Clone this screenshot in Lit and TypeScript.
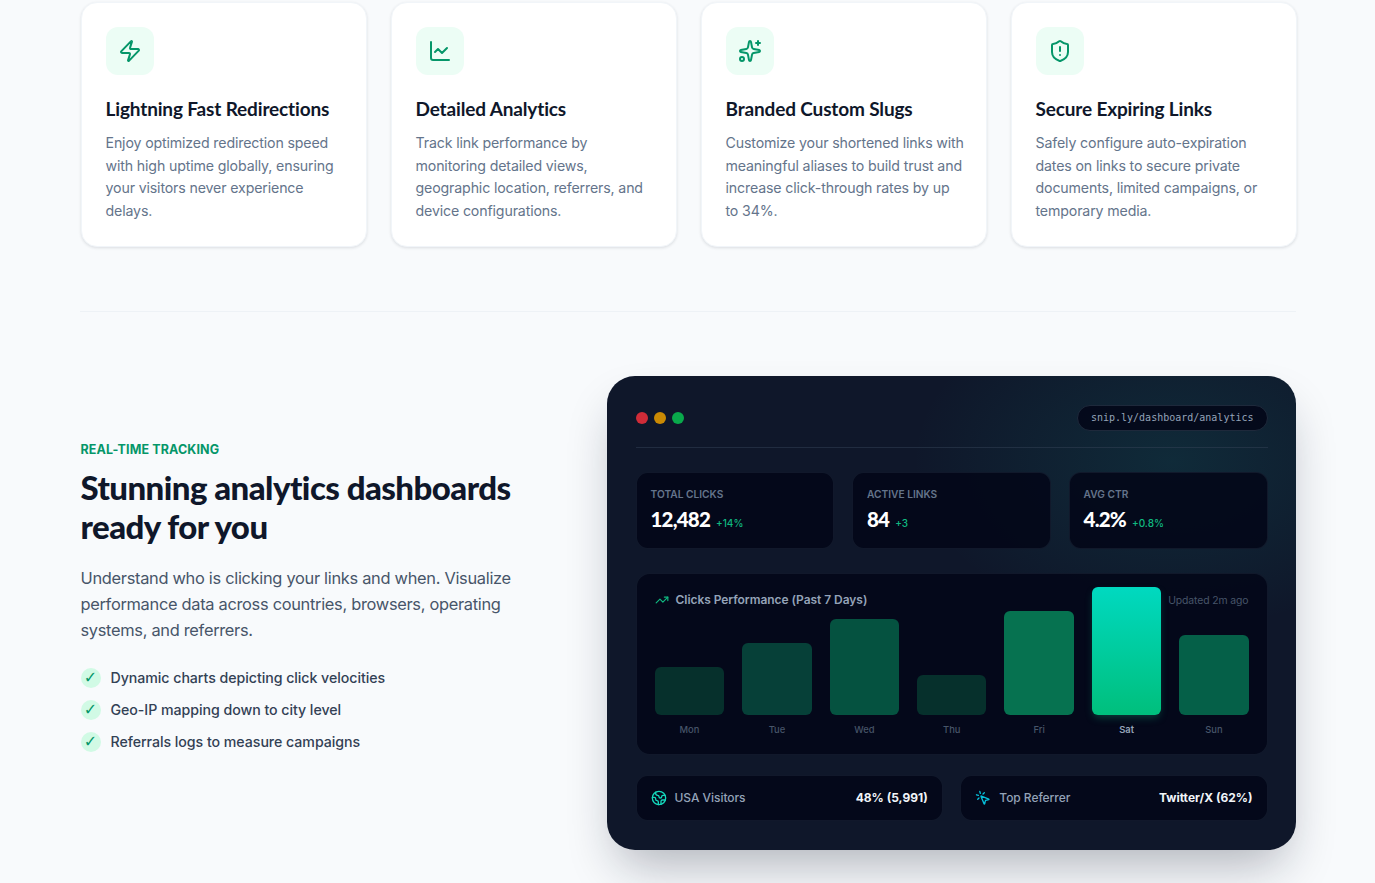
import {LitElement, html, css, svg} from 'lit';
import {customElement} from 'lit/decorators.js';

const icon = (body: unknown, size = 24, cls = '') => html`<svg class=${cls} width=${size} height=${size} viewBox="0 0 24 24" fill="none" stroke="currentColor" stroke-width="2" stroke-linecap="round" stroke-linejoin="round">${body}</svg>`;

const zap = svg`<path d="M4 14a1 1 0 0 1-.78-1.63l9.9-10.2a.5.5 0 0 1 .86.46l-1.92 6.02A1 1 0 0 0 13 10h7a1 1 0 0 1 .78 1.63l-9.9 10.2a.5.5 0 0 1-.86-.46l1.92-6.02A1 1 0 0 0 11 14z"/>`;
const chart = svg`<path d="M3 3v16a2 2 0 0 0 2 2h16"/><path d="m19 9-5 5-4-4-3 3"/>`;
const sparkles = svg`<path d="M11.017 2.814a1 1 0 0 1 1.966 0l1.051 5.558a2 2 0 0 0 1.594 1.594l5.558 1.051a1 1 0 0 1 0 1.966l-5.558 1.051a2 2 0 0 0-1.594 1.594l-1.051 5.558a1 1 0 0 1-1.966 0l-1.051-5.558a2 2 0 0 0-1.594-1.594l-5.558-1.051a1 1 0 0 1 0-1.966l5.558-1.051a2 2 0 0 0 1.594-1.594z"/><path d="M20 2v4"/><path d="M22 4h-4"/><circle cx="4" cy="20" r="2"/>`;
const shield = svg`<path d="M20 13c0 5-3.5 7.5-7.66 8.95a1 1 0 0 1-.67-.01C7.5 20.5 4 18 4 13V6a1 1 0 0 1 1-1c2 0 4.5-1.2 6.24-2.72a1.17 1.17 0 0 1 1.52 0C14.51 3.81 17 5 19 5a1 1 0 0 1 1 1z"/><path d="M12 8v4"/><path d="M12 16h.01"/>`;
const trending = svg`<polyline points="22 7 13.5 15.5 8.5 10.5 2 17"/><polyline points="16 7 22 7 22 13"/>`;
const earth = svg`<path d="M21.54 15H17a2 2 0 0 0-2 2v4.54"/><path d="M7 3.34V5a3 3 0 0 0 3 3a2 2 0 0 1 2 2c0 1.1.9 2 2 2a2 2 0 0 0 2-2c0-1.1.9-2 2-2h3.17"/><path d="M11 21.95V18a2 2 0 0 0-2-2a2 2 0 0 1-2-2v-1a2 2 0 0 0-2-2H2.05"/><circle cx="12" cy="12" r="10"/>`;
const pointer = svg`<path d="M14 4.1 12 6"/><path d="m5.1 8-2.9-.8"/><path d="m6 12-1.9 2"/><path d="M7.2 2.2 8 5.1"/><path d="M9.037 9.69a.498.498 0 0 1 .653-.653l11 4.5a.5.5 0 0 1-.074.949l-4.349 1.041a1 1 0 0 0-.74.739l-1.04 4.35a.5.5 0 0 1-.95.074z"/>`;

const features = [
	{icon: zap, title: 'Lightning Fast Redirections', text: 'Enjoy optimized redirection speed with high uptime globally, ensuring your visitors never experience delays.'},
	{icon: chart, title: 'Detailed Analytics', text: 'Track link performance by monitoring detailed views, geographic location, referrers, and device configurations.'},
	{icon: sparkles, title: 'Branded Custom Slugs', text: 'Customize your shortened links with meaningful aliases to build trust and increase click-through rates by up to\u00a034%.'},
	{icon: shield, title: 'Secure Expiring Links', text: 'Safely configure auto-expiration dates on links to secure private documents, limited campaigns, or temporary media.'},
];

const stats = [
	{label: 'Total Clicks', value: '12,482', delta: '+14%'},
	{label: 'Active Links', value: '84', delta: '+3'},
	{label: 'Avg CTR', value: '4.2%', delta: '+0.8%'},
];

const bars = [
	{day: 'Mon', h: 48, color: '#06302c'},
	{day: 'Tue', h: 72, color: '#064038'},
	{day: 'Wed', h: 96, color: '#055240'},
	{day: 'Thu', h: 40, color: '#06302c'},
	{day: 'Fri', h: 104, color: '#067250'},
	{day: 'Sat', h: 128, color: '', active: true},
	{day: 'Sun', h: 80, color: '#056048'},
];

const checks = ['Dynamic charts depicting click velocities', 'Geo-IP mapping down to city level', 'Referrals logs to measure campaigns'];

@customElement('app-root')
export class AppRoot extends LitElement {
	static styles = css`
		:host {
			display: block;
			min-height: 883px;
			background: #f8fafc;
			font-family: Inter, "Liberation Sans", sans-serif;
		}
		* { box-sizing: border-box; }
		.page { width: 1216px; margin: 0 auto; padding: 2px 0 33px; }
		.features {
			display: grid;
			grid-template-columns: repeat(4, 286px);
			gap: 24px;
			padding-left: 1px;
			padding-bottom: 64px;
			border-bottom: 1px solid #eef2f6;
		}
		.card {
			height: 245px;
			padding: 24px 19px 24px 24px;
			background: #fff;
			border: 1px solid #f1f5f9;
			border-radius: 16px;
			box-shadow: 0 1px 3px rgba(15, 23, 42, 0.12);
		}
		.card-icon {
			display: flex;
			align-items: center;
			justify-content: center;
			width: 48px;
			height: 48px;
			border-radius: 12px;
			background: #ecfdf5;
			color: #059669;
		}
		.card h3 {
			margin: 21px 0 9.8px;
			font-family: Lato, sans-serif;
			font-size: 19px;
			line-height: 26px;
			font-weight: 700;
			letter-spacing: -0.15px;
			color: #0f172a;
		}
		.card p {
			margin: 0;
			font-size: 14.2px;
			line-height: 22.7px;
			letter-spacing: -0.15px;
			color: #64748b;
		}
		.tracking {
			display: grid;
			grid-template-columns: 1fr 689px;
			gap: 64px;
			align-items: center;
			padding-top: 64px;
			padding-left: 1px;
		}
		.intro { padding-bottom: 32px; }
		.eyebrow {
			font-size: 12.5px;
			line-height: 16px;
			font-weight: 700;
			letter-spacing: 0.01em;
			color: #059669;
			text-transform: uppercase;
		}
		h2 {
			margin: 10px 0 20px;
			font-family: Lato, sans-serif;
			font-size: 33px;
			line-height: 38.4px;
			font-weight: 900;
			letter-spacing: -0.55px;
			color: #0f172a;
		}
		.lead {
			margin: 0 0 25px;
			max-width: 440px;
			font-size: 16.4px;
			line-height: 26px;
			letter-spacing: -0.3px;
			color: #475569;
		}
		ul { list-style: none; margin: 0; padding: 0; display: grid; gap: 12px; }
		li {
			display: flex;
			align-items: center;
			gap: 10px;
			font-size: 14.2px;
			line-height: 20px;
			font-weight: 500;
			letter-spacing: -0.05px;
			color: #334155;
		}
		.tick {
			display: flex;
			align-items: center;
			justify-content: center;
			width: 20px;
			height: 20px;
			border-radius: 50%;
			background: #d1fae5;
			color: #059669;
			font-family: "DejaVu Sans", sans-serif;
			font-size: 16px;
		}
		.panel {
			position: relative;
			height: 474px;
			padding: 29px 28px 29px 29px;
			border-radius: 28px;
			background:
				radial-gradient(260px 170px at 82% 18%, rgba(20, 184, 166, 0.12), rgba(20, 184, 166, 0) 100%),
				#0f172a;
			box-shadow: 0 25px 50px -12px rgba(15, 23, 42, 0.32);
		}
		.topbar {
			display: flex;
			align-items: center;
			justify-content: space-between;
			height: 43px;
			padding-bottom: 16px;
			border-bottom: 1px solid rgba(51, 65, 85, 0.5);
			margin-bottom: 24px;
		}
		.dots { display: flex; gap: 6px; }
		.dot { width: 12px; height: 12px; border-radius: 50%; }
		.url {
			height: 26px;
			padding: 0 13px 2px;
			display: flex;
			align-items: center;
			border: 1px solid #1e293b;
			border-radius: 13px;
			background: rgba(2, 6, 23, 0.86);
			font-family: "DejaVu Sans Mono", monospace;
			font-size: 10px;
			color: #94a3b8;
		}
		.tile {
			background: rgba(2, 6, 23, 0.86);
			border: 1px solid #1e293b80;
		}
		.stats {
			display: grid;
			grid-template-columns: repeat(3, 1fr);
			gap: 17.6px;
			margin-bottom: 24px;
		}
		.stat { height: 77px; padding: 14px 14px; border-radius: 12px; }
		.stat-label {
			font-size: 10.2px;
			line-height: 14px;
			font-weight: 600;
			text-transform: uppercase;
			color: #64748b;
		}
		.stat-row { display: flex; align-items: baseline; gap: 6px; margin-top: 5px; }
		.stat-value {
			font-family: Lato, sans-serif;
			font-size: 20.5px;
			line-height: 26px;
			font-weight: 900;
			letter-spacing: -0.8px;
			color: #fff;
		}
		.stat-delta { font-size: 10px; font-weight: 500; color: #10b981; }
		.chart {
			position: relative;
			height: 182px;
			padding: 0 17.8px 0 18.3px;
			border-radius: 14px;
			margin-bottom: 20px;
		}
		.chart-head {
			position: absolute;
			top: 17px;
			left: 18px;
			right: 18px;
			display: flex;
			align-items: center;
			justify-content: space-between;
		}
		.chart-title {
			display: flex;
			align-items: center;
			gap: 7px;
			font-size: 12px;
			line-height: 18px;
			font-weight: 600;
			letter-spacing: -0.05px;
			color: #94a3b8;
		}
		.chart-title svg { color: #10b981; }
		.updated { font-size: 10.4px; letter-spacing: -0.1px; color: #475569; }
		.bars {
			display: grid;
			grid-template-columns: repeat(7, 1fr);
			gap: 18px;
			height: 100%;
			align-items: end;
			padding-bottom: 18px;
			position: relative;
		}
		.col { display: flex; flex-direction: column; align-items: stretch; }
		.bar { border-radius: 6px; }
		.bar.active {
			background: linear-gradient(to bottom, #00d9c0, #00bf7c);
			box-shadow: 0 4px 8px -2px rgba(16, 185, 129, 0.35);
		}
		.day {
			margin-top: 9px;
			text-align: center;
			font-size: 9.4px;
			line-height: 12px;
			font-weight: 500;
			color: #475569;
		}
		.day.active { color: #94a3b8; font-weight: 600; }
		.bottom {
			display: grid;
			grid-template-columns: repeat(2, 1fr);
			gap: 17.6px;
		}
		.info {
			height: 46px;
			padding: 0 14px 1px;
			display: flex;
			align-items: center;
			border-radius: 12px;
			font-size: 12px;
		}
		.info svg { margin-right: 8px; }
		.info .earth { color: #14d8bc; }
		.info .pointer { color: #06c1dc; }
		.info-label { flex: 1; font-weight: 500; letter-spacing: -0.05px; color: #94a3b8; }
		.info-value { font-weight: 700; color: #f1f5f9; }
	`;

	render() {
		return html`
			<div class="page">
				<section class="features">
					${features.map(f => html`
						<article class="card">
							<div class="card-icon">${icon(f.icon)}</div>
							<h3>${f.title}</h3>
							<p>${f.text}</p>
						</article>
					`)}
				</section>
				<section class="tracking">
					<div class="intro">
						<div class="eyebrow">Real-time tracking</div>
						<h2>Stunning analytics dashboards ready for you</h2>
						<p class="lead">Understand who is clicking your links and when. Visualize performance data across countries, browsers, operating systems, and referrers.</p>
						<ul>
							${checks.map(c => html`<li><span class="tick">✓</span>${c}</li>`)}
						</ul>
					</div>
					<div class="panel">
						<div class="topbar">
							<div class="dots">
								<span class="dot" style="background:#d02c38"></span>
								<span class="dot" style="background:#ca8a04"></span>
								<span class="dot" style="background:#09a94b"></span>
							</div>
							<div class="url">snip.ly/dashboard/analytics</div>
						</div>
						<div class="stats">
							${stats.map(s => html`
								<div class="stat tile">
									<div class="stat-label">${s.label}</div>
									<div class="stat-row">
										<span class="stat-value">${s.value}</span>
										<span class="stat-delta">${s.delta}</span>
									</div>
								</div>
							`)}
						</div>
						<div class="chart tile">
							<div class="bars">
								${bars.map(b => html`
									<div class="col">
										<div class="bar ${b.active ? 'active' : ''}" style="height:${b.h}px;background-color:${b.color}"></div>
										<div class="day ${b.active ? 'active' : ''}">${b.day}</div>
									</div>
								`)}
							</div>
							<div class="chart-head">
								<div class="chart-title">${icon(trending, 14)}Clicks Performance (Past 7 Days)</div>
								<div class="updated">Updated 2m ago</div>
							</div>
						</div>
						<div class="bottom">
							<div class="info tile">
								${icon(earth, 16, 'earth')}
								<span class="info-label">USA Visitors</span>
								<span class="info-value">48% (5,991)</span>
							</div>
							<div class="info tile">
								${icon(pointer, 16, 'pointer')}
								<span class="info-label">Top Referrer</span>
								<span class="info-value">Twitter/X (62%)</span>
							</div>
						</div>
					</div>
				</section>
			</div>
		`;
	}
}
